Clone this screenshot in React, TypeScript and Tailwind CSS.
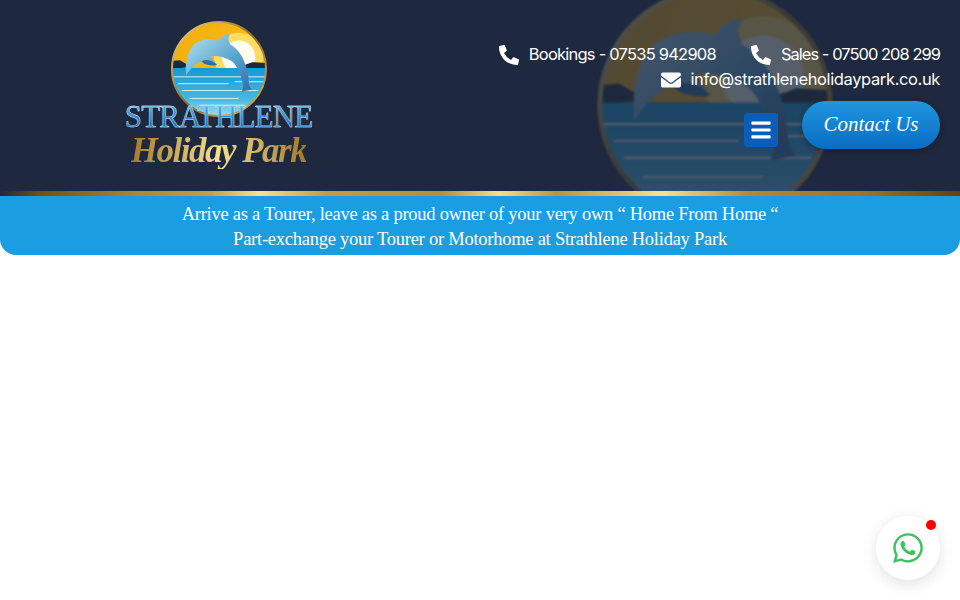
import { FaBars, FaEnvelope, FaPhoneAlt, FaWhatsapp } from "react-icons/fa";

function DolphinBadge({ id, className }: { id: string; className: string }) {
  return (
    <svg viewBox="0 0 100 100" className={className}>
      <defs>
        <linearGradient id={`${id}-sky`} x1="0" y1="0" x2="1" y2="0.3">
          <stop offset="0" stopColor="#f0ab0c" />
          <stop offset="1" stopColor="#fbbd16" />
        </linearGradient>
        <linearGradient id={`${id}-sea`} x1="0" y1="0" x2="0" y2="1">
          <stop offset="0" stopColor="#129cd4" />
          <stop offset="0.6" stopColor="#45b6e0" />
          <stop offset="1" stopColor="#a3e0f2" />
        </linearGradient>
        <linearGradient id={`${id}-body`} x1="0" y1="0" x2="1" y2="1">
          <stop offset="0" stopColor="#b4e2ec" />
          <stop offset="0.55" stopColor="#5ba6cf" />
          <stop offset="1" stopColor="#2b6f9f" />
        </linearGradient>
        <linearGradient id={`${id}-ring`} x1="0" y1="0" x2="1" y2="1">
          <stop offset="0" stopColor="#f5dc8a" />
          <stop offset="0.5" stopColor="#8c6a23" />
          <stop offset="1" stopColor="#d9b659" />
        </linearGradient>
        <clipPath id={`${id}-clip`}>
          <circle cx="50" cy="50" r="48" />
        </clipPath>
      </defs>
      <g clipPath={`url(#${id}-clip)`}>
        <rect width="100" height="49" fill={`url(#${id}-sky)`} />
        <circle cx="70" cy="38" r="25" fill="#ffdc5e" />
        <circle cx="70" cy="38" r="17" fill="#fffdf0" />
        <path d="M0 42 L10 41 L22 48 L0 50 Z M70 48 L84 43 L100 44 L100 50 L70 50 Z" fill="#1c2b3a" />
        <rect y="49" width="100" height="51" fill={`url(#${id}-sea)`} />
        <path d="M2 58 H98 M8 65 H60 M66 63 H96 M12 72 H90 M20 80 H70 M30 87 H76" stroke="#e9f8fc" strokeWidth="0.9" />
        <path
          d="M16.4 56.7 C15 42 19 30 24.8 24.8 C33 18.5 42 18.5 50 21 C52 17 56 14.5 61.7 14 C59 17 59 21 61.7 25 C68 29 73 35 76 43 C79 50 80.5 58 80.5 65 C81 68 82 70 84 71 L73 73 C75 70 75 67 73.5 61.7 C71 53 68 46 63 42 C56 38 48 36 41.6 37 L48 46 C42 47 36 46 32 42 C26 45 20 50 16.4 56.7 Z"
          fill={`url(#${id}-body)`}
        />
        <path d="M32 42 C37 40 42 40 48 46 C42 47 36 46 32 42 Z" fill="#2f6f9c" />
      </g>
      <circle cx="50" cy="50" r="48" fill="none" stroke={`url(#${id}-ring)`} strokeWidth="2" />
    </svg>
  );
}

function ContactLine({ icon, text, tracking }: { icon: React.ReactNode; text: string; tracking: string }) {
  return (
    <span className="flex items-center gap-[10px] h-[25px]">
      <span className="w-5 flex justify-center text-xl">{icon}</span>
      <span className={`font-['Inter',sans-serif] text-[16.5px] text-white ${tracking}`}>{text}</span>
    </span>
  );
}

export default function App() {
  return (
    <div className="min-h-screen bg-white overflow-hidden relative">
      <header className="relative h-[191px] bg-[#1e283e] overflow-hidden flex justify-between">
        <div className="absolute left-[595px] top-[-15px] w-[240px] h-[240px] opacity-25 blur-[1px]">
          <DolphinBadge id="mark" className="w-full h-full" />
        </div>

        <div className="relative ml-[126px] mt-[20px] w-[185px] flex flex-col items-center">
          <DolphinBadge id="logo" className="w-[98px] h-[98px] shrink-0" />
          <div className="-mt-[14px] font-['Liberation_Serif',serif] text-[31px] leading-[26px] tracking-[-0.9px] whitespace-nowrap bg-gradient-to-b from-[#5aaee4] to-[#1565b4] bg-clip-text text-transparent [-webkit-text-stroke:0.4px_#dff2fb]">
            STRATHLENE
          </div>
          <div className="mt-[3px] font-['Liberation_Serif',serif] italic font-bold text-[35px] leading-[36px] tracking-[-1.5px] whitespace-nowrap bg-gradient-to-r from-[#a47a28] via-[#f4e08f] to-[#a47a28] bg-clip-text text-transparent">
            Holiday Park
          </div>
        </div>

        <div className="relative pt-[42px] pr-5 flex flex-col items-end text-white">
          <div className="flex gap-[35px]">
            <ContactLine icon={<FaPhoneAlt />} text="Bookings - 07535 942908" tracking="tracking-[-0.78px]" />
            <ContactLine icon={<FaPhoneAlt />} text="Sales - 07500 208 299" tracking="tracking-[-0.98px]" />
          </div>
          <ContactLine icon={<FaEnvelope />} text="info@strathleneholidaypark.co.uk" tracking="tracking-[-0.38px]" />
          <div className="mt-[9px] flex items-center gap-6">
            <button className="w-[34px] h-[34px] mt-[9px] rounded-[3px] bg-[#0a5db8] flex items-center justify-center text-[22px]">
              <FaBars />
            </button>
            <button className="w-[138px] h-[48px] rounded-[24px] bg-gradient-to-b from-[#2196dd] to-[#0a6cc4] shadow-[0_2px_6px_rgba(0,0,0,0.3)] font-['Liberation_Serif',serif] italic text-[21px] text-white">
              Contact Us
            </button>
          </div>
        </div>
      </header>

      <div className="h-[5px] bg-[linear-gradient(90deg,#1e283e_0%,#6b4f18_4%,#a98733_14%,#c2a04a_22%,#f3e590_27%,#c09c46_34%,#b28f3c_46%,#f0e28c_52%,#b8953f_58%,#f3e590_69%,#b08a36_78%,#9a7428_90%,#5e4215_100%)]" />

      <div className="h-[59px] bg-[#1b9de2] rounded-b-2xl pt-[6px] text-center text-white font-['Liberation_Serif',serif] text-[18.5px] tracking-[-0.25px] leading-[25px]">
        <p>Arrive as a Tourer, leave as a proud owner of your very own “ Home From Home “</p>
        <p>Part-exchange your Tourer or Motorhome at Strathlene Holiday Park</p>
      </div>

      <button className="fixed right-5 bottom-5 w-16 h-16 rounded-full bg-white shadow-[0_4px_16px_rgba(0,0,0,0.12)] flex items-center justify-center text-[34px] text-[#3cc35f]">
        <FaWhatsapp />
        <span className="absolute top-1 right-1 w-[10px] h-[10px] rounded-full bg-[#f00]" />
      </button>
    </div>
  );
}
